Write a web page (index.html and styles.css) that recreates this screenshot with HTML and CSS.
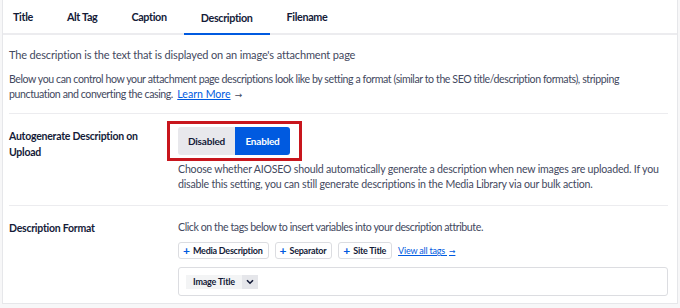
FILE: index.html
```html
<!DOCTYPE html>
<html>
<head>
<meta charset="utf-8">
<link rel="stylesheet" href="styles.css">
</head>
<body>
<div class="card">
  <div class="tabs">
    <div class="tab">Title</div>
    <div class="tab">Alt Tag</div>
    <div class="tab">Caption</div>
    <div class="tab active">Description</div>
    <div class="tab">Filename</div>
  </div>
  <div class="intro">
    <p class="p1">The description is the text that is displayed on an image's attachment page</p>
    <p class="p2 tight">Below you can control how your attachment page descriptions look like by setting a format (similar to the SEO title/description formats), stripping punctuation and converting the casing. <a class="link">Learn More</a> <span class="arrow">→</span></p>
  </div>
  <div class="row row-auto">
    <div class="label">Autogenerate Description on Upload</div>
    <div class="content">
      <div class="toggle-wrap">
        <div class="toggle">
          <span class="seg off">Disabled</span>
          <span class="seg on">Enabled</span>
        </div>
        <div class="highlight"></div>
      </div>
      <p class="help tight">Choose whether AIOSEO should automatically generate a description when new images are uploaded. If you disable this setting, you can still generate descriptions in the Media Library via our bulk action.</p>
    </div>
  </div>
  <div class="row row-format">
    <div class="label">Description Format</div>
    <div class="content">
      <p class="help2 tight">Click on the tags below to insert variables into your description attribute.</p>
      <div class="tags">
        <span class="tag"><span class="plus">+</span>Media Description</span>
        <span class="tag"><span class="plus">+</span>Separator</span>
        <span class="tag"><span class="plus">+</span>Site Title</span>
        <a class="viewall">View all tags <span class="arrow">→</span></a>
      </div>
      <div class="input">
        <span class="chip"><span class="chip-text">Image Title</span><span class="chip-drop"><svg width="8" height="6" viewBox="0 0 8 6"><path d="M1 1.2 L4 4.2 L7 1.2" fill="none" stroke="#141b38" stroke-width="1.6"/></svg></span></span>
      </div>
    </div>
  </div>
</div>
</body>
</html>
```

FILE: styles.css
```css
* { box-sizing: border-box; }
html, body { margin: 0; padding: 0; }
body {
  background: #f7f7f8;
  font-family: "Lato", "Noto Sans", sans-serif;
  color: #434960;
  width: 680px;
  height: 308px;
  overflow: hidden;
}
p { margin: 0; }
.arrow { font-family: "DejaVu Sans", sans-serif; font-size: 0.85em; letter-spacing: 0; margin-left: 2px; }
.card {
  margin-left: 2px;
  width: 676px;
  height: 304px;
  background: #fff;
  border: 1px solid #e6e7ea;
  border-top: none;
}
.tabs {
  display: flex;
  height: 35px;
  border-bottom: 2px solid #ececef;
}
.tab {
  padding: 0 17px;
  height: 33px;
  display: flex;
  align-items: center;
  font-size: 10.8px;
  font-weight: 700;
  letter-spacing: -0.35px;
  color: #141b38;
}
.tab:first-child { padding-left: 10px; }
.tab.active {
  border-bottom: 2px solid #005ae0;
  height: 35px;
  padding-top: 2px;
  margin-bottom: -2px;
}
.intro {
  padding: 12px 9px 0 6px;
  font-size: 11px;
  line-height: 15.5px;
  height: 78px;
}
.p1 { letter-spacing: -0.15px; }
.p2 { margin-top: 9px; }
.tight { font-size: 10.6px; letter-spacing: -0.42px; }
.link { color: #005ae0; text-decoration: underline; letter-spacing: 0; margin-left: 2px; }
.row {
  display: flex;
  margin: 0 9px 0 6px;
  border-top: 1px solid #ececef;
}
.label {
  width: 169px;
  flex: none;
  font-size: 10.5px;
  font-weight: 700;
  letter-spacing: -0.25px;
  color: #141b38;
  line-height: 16px;
  padding-right: 20px;
}
.content { flex: 1; }
.row-auto { height: 92px; }
.row-auto .label { padding-top: 14px; }
.row-auto .content { padding-top: 13px; }
.toggle-wrap { position: relative; width: 112px; }
.toggle {
  display: flex;
  height: 28px;
  border-radius: 3px;
  overflow: hidden;
}
.seg {
  display: flex;
  align-items: center;
  justify-content: center;
  font-size: 10px;
  font-weight: 700;
  letter-spacing: -0.2px;
}
.seg.off { width: 57px; background: #e8e8ec; color: #141b38; }
.seg.on { width: 55px; background: #005ae0; color: #fff; }
.highlight {
  position: absolute;
  left: -11px;
  top: -6px;
  width: 135px;
  height: 40px;
  border: 3px solid #c8161d;
}
.help {
  margin-top: 7px;
  line-height: 15px;
  letter-spacing: -0.2px;
}
.row-format .label { padding-top: 14px; }
.row-format .content { padding-top: 14px; }
.help2 { line-height: 15px; }
.tags {
  display: flex;
  align-items: center;
  gap: 6px;
  margin-top: 7px;
}
.tag {
  height: 17px;
  display: flex;
  align-items: center;
  padding: 0 5px 0 4px;
  border: 1px solid #dcdde1;
  border-radius: 3px;
  font-size: 9px;
  font-weight: 700;
  letter-spacing: -0.25px;
  color: #141b38;
}
.plus { color: #005ae0; font-size: 12px; font-weight: 700; margin-right: 3px; line-height: 1; letter-spacing: 0; }
.viewall { color: #005ae0; text-decoration: underline; font-size: 9px; letter-spacing: -0.2px; }
.input {
  margin-top: 8px;
  height: 29px;
  border: 1px solid #dcdde1;
  border-radius: 3px;
  padding: 7px;
  display: flex;
  align-items: center;
}
.chip {
  display: flex;
  height: 14px;
  background: #f3f4f5;
  font-size: 9px;
  font-weight: 700;
  letter-spacing: -0.2px;
  color: #141b38;
}
.chip-text { padding: 0 7px; display: flex; align-items: center; }
.chip-drop {
  width: 16px;
  background: #e5e6ea;
  display: flex;
  align-items: center;
  justify-content: center;
}
```
